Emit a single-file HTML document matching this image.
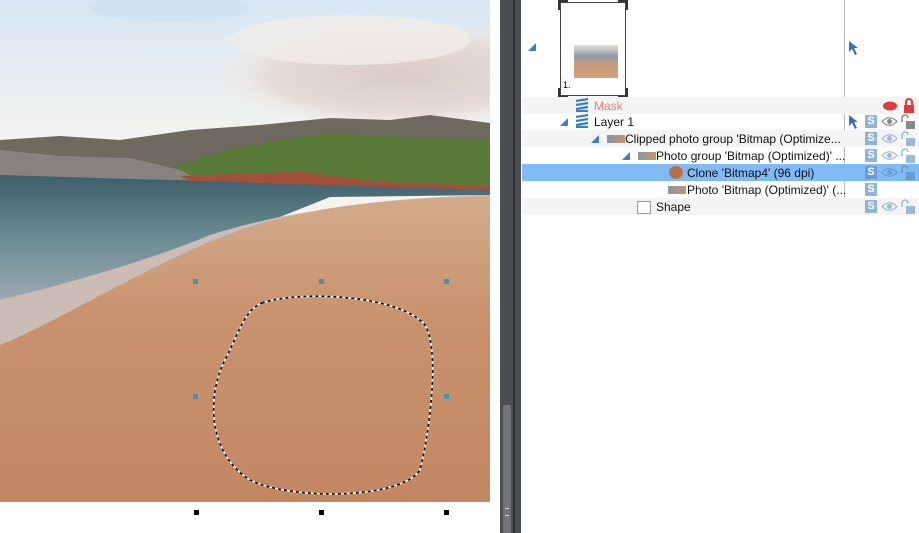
<!DOCTYPE html>
<html><head><meta charset="utf-8"><style>
body{margin:0;width:919px;height:533px;overflow:hidden;background:#fff;font-family:"Liberation Sans","DejaVu Sans",sans-serif;position:relative}
.abs{position:absolute}
.row{position:absolute;left:522px;width:397px;height:17px;font-size:12px;line-height:19px;color:#111}
.g{background:#f4f4f4}.sel{background:#80bbf5}
.tri{position:absolute;width:0;height:0;border-left:8px solid transparent;border-bottom:8px solid #3c7fc4}
.S{position:absolute;left:343px;top:2px;width:12px;height:13px;background:#8fb4dc;color:#fff;font-weight:bold;font-size:11px;line-height:13px;text-align:center}
.sel .S{background:#6a9ad0}
.eye{position:absolute;left:359px;top:3px}
.lk{position:absolute;left:378px;top:1px}
.lay{position:absolute;width:16px;height:14px}
.thumb{position:absolute;width:18px;height:8px;background:linear-gradient(90deg,#8a94a0,#c89470);top:5px}
.br{position:absolute;width:8px;height:8px;border-color:#333;border-style:solid;border-width:0}
</style></head><body>
<svg class="abs" style="left:0;top:0" width="490" height="502" viewBox="0 0 490 502">
<defs>
<linearGradient id="sky" x1="0" y1="0" x2="0" y2="1"><stop offset="0" stop-color="#d6e6f2"/><stop offset=".3" stop-color="#f6f4f0"/><stop offset="1" stop-color="#f5e6d2"/></linearGradient>
<linearGradient id="sea" x1="0" y1="0" x2="0" y2="1"><stop offset="0" stop-color="#3d5d6a"/><stop offset=".5" stop-color="#6a8c92"/><stop offset="1" stop-color="#9ca9b0"/></linearGradient>
<linearGradient id="sand" x1="0" y1="0" x2="0" y2="1"><stop offset="0" stop-color="#d3ab8b"/><stop offset=".4" stop-color="#c9926e"/><stop offset="1" stop-color="#c18762"/></linearGradient>
<radialGradient id="cl" cx=".5" cy=".5" r=".5"><stop offset="0" stop-color="#d9cbc6"/><stop offset=".7" stop-color="#e6ddd8"/><stop offset="1" stop-color="#f2ede8" stop-opacity="0"/></radialGradient>
</defs>
<rect width="490" height="502" fill="url(#sky)"/>
<ellipse cx="170" cy="8" rx="80" ry="14" fill="#cfe3f2"/>
<ellipse cx="400" cy="75" rx="190" ry="55" fill="url(#cl)"/>
<ellipse cx="350" cy="40" rx="120" ry="25" fill="#f0ece8" opacity=".8"/>
<polygon points="0,140 60,136 120,140 190,130 260,125 330,118 390,120 430,115 490,123 490,190 0,180" fill="#6f6a60"/>
<polygon points="150,175 220,152 270,142 330,133 390,136 490,140 490,192 200,185" fill="#5a7a3a"/>
<polygon points="0,150 60,156 130,158 180,170 200,180 0,178" fill="#878381"/>
<polygon points="180,176 300,172 380,182 490,186 490,192 200,186" fill="#a2503a"/>
<polygon points="0,175 490,190 490,195 330,197 210,245 150,270 0,300" fill="url(#sea)"/>
<path d="M0,300 L0,345 C60,320 130,275 215,240 C260,222 320,200 490,195 L490,200 C330,200 260,220 210,235 C150,260 80,280 0,300Z" fill="#cbbcb5"/>
<path d="M0,345 C60,320 130,275 215,240 C260,222 320,200 490,196 L490,502 L0,502Z" fill="url(#sand)"/>
<path d="M262,303 C300,290 400,295 425,325 C440,350 430,430 420,470 C400,500 290,500 250,480 C210,455 205,400 225,360 C240,330 245,310 262,303Z" fill="none" stroke="#fff" stroke-width="1.5"/>
<path d="M262,303 C300,290 400,295 425,325 C440,350 430,430 420,470 C400,500 290,500 250,480 C210,455 205,400 225,360 C240,330 245,310 262,303Z" fill="none" stroke="#000" stroke-width="1.5" stroke-dasharray="3 3"/>
<g fill="#4a8fb8"><rect x="193" y="279" width="5" height="5"/><rect x="319" y="279" width="5" height="5"/><rect x="444" y="279" width="5" height="5"/><rect x="193" y="394" width="5" height="5"/><rect x="444" y="394" width="5" height="5"/></g>
</svg>
<div class="abs" style="left:194px;top:510px;width:5px;height:5px;background:#000"></div>
<div class="abs" style="left:319px;top:510px;width:5px;height:5px;background:#000"></div>
<div class="abs" style="left:444px;top:510px;width:5px;height:5px;background:#000"></div>
<div class="abs" style="left:500px;top:0;width:21px;height:533px;background:#4a4d52"></div>
<div class="abs" style="left:513px;top:0;width:2px;height:533px;background:#2e3034"></div>
<div class="abs" style="left:503px;top:405px;width:8px;height:128px;background:#717378;border-radius:2px"></div>
<div class="abs" style="left:505px;top:508px;width:4px;height:6px;border-top:1px solid #ccc;border-bottom:1px solid #ccc"></div>
<div class="abs" style="left:844px;top:0;width:1px;height:215px;background:#bbb"></div>
<div class="tri" style="left:528px;top:43px"></div>
<svg class="abs" style="left:848px;top:40px" width="10" height="16"><path d="M1,1 L1,12 L4,9 L7,15 L9,14 L6,8 L10,8Z" fill="#3a72b8"/></svg>
<div class="abs" style="left:560px;top:2px;width:64px;height:92px;border:1px solid #444;background:#fff"></div>
<div class="br" style="left:558px;top:0;border-top-width:2px;border-left-width:2px"></div>
<div class="br" style="left:618px;top:0;border-top-width:2px;border-right-width:2px"></div>
<div class="br" style="left:558px;top:88px;border-bottom-width:2px;border-left-width:2px"></div>
<div class="br" style="left:618px;top:88px;border-bottom-width:2px;border-right-width:2px"></div>
<div class="abs" style="left:574px;top:45px;width:44px;height:33px;background:linear-gradient(180deg,#e8e0da 0%,#8d9aa6 35%,#c79b7a 60%,#d2a07d 100%)"></div>
<div class="abs" style="left:563px;top:80px;font-size:9px">1.</div>
<div class="row g" style="top:97px"><svg class="lay" style="left:52px;top:1px" viewBox="0 0 16 14"><path d="M2,3 L14,1 M2,7 L14,5 M2,11 L14,9 M2,13 L14,13" stroke="#3c7fc4" stroke-width="2.2"/></svg><span style="position:absolute;left:72px;color:#e88080">Mask</span>
<svg class="abs" style="left:360px;top:4px" width="16" height="10"><ellipse cx="8" cy="5" rx="7" ry="4.5" fill="#e03a3a"/></svg>
<svg class="abs" style="left:381px;top:1px" width="12" height="15"><path d="M3,7 V4 a3,3 0 0 1 6,0 V7" stroke="#e03a3a" stroke-width="2" fill="none"/><rect x="1" y="7" width="10" height="8" fill="#e03a3a"/></svg></div>
<div class="row" style="top:113px"><div class="tri" style="left:38px;top:5px"></div><svg class="lay" style="left:52px;top:1px" viewBox="0 0 16 14"><path d="M2,3 L14,1 M2,7 L14,5 M2,11 L14,9 M2,13 L14,13" stroke="#3c7fc4" stroke-width="2.2"/></svg><span style="position:absolute;left:72px">Layer 1</span>
<svg class="abs" style="left:326px;top:1px" width="10" height="16"><path d="M1,1 L1,12 L4,9 L7,15 L9,14 L6,8 L10,8Z" fill="#3a72b8"/></svg>
<div class="S">S</div><svg class="eye" width="17" height="11"><path d="M1,5.5 Q8.5,-2 16,5.5 Q8.5,13 1,5.5Z" fill="none" stroke="#888" stroke-width="1.2"/><circle cx="8.5" cy="5.5" r="2.5" fill="#888"/></svg><svg class="lk" width="16" height="15"><path d="M2,8 V4 a3,3 0 0 1 6,0" stroke="#888" stroke-width="1.6" fill="none"/><rect x="6" y="7" width="9" height="8" fill="#888"/></svg></div>
<div class="row g" style="top:130px"><div class="tri" style="left:69px;top:5px"></div><div class="thumb" style="left:85px"></div><span style="position:absolute;left:103px">Clipped photo group 'Bitmap (Optimize...</span><div class="S">S</div><svg class="eye" width="17" height="11"><path d="M1,5.5 Q8.5,-2 16,5.5 Q8.5,13 1,5.5Z" fill="none" stroke="#9bb9dc" stroke-width="1.2"/><circle cx="8.5" cy="5.5" r="2.5" fill="#9bb9dc"/></svg><svg class="lk" width="16" height="15"><path d="M2,8 V4 a3,3 0 0 1 6,0" stroke="#9bb9dc" stroke-width="1.6" fill="none"/><rect x="6" y="7" width="9" height="8" fill="#9bb9dc"/></svg></div>
<div class="row" style="top:147px"><div class="tri" style="left:100px;top:5px"></div><div class="thumb" style="left:116px"></div><span style="position:absolute;left:134px">Photo group 'Bitmap (Optimized)' ...</span><div class="S">S</div><svg class="eye" width="17" height="11"><path d="M1,5.5 Q8.5,-2 16,5.5 Q8.5,13 1,5.5Z" fill="none" stroke="#9bb9dc" stroke-width="1.2"/><circle cx="8.5" cy="5.5" r="2.5" fill="#9bb9dc"/></svg><svg class="lk" width="16" height="15"><path d="M2,8 V4 a3,3 0 0 1 6,0" stroke="#9bb9dc" stroke-width="1.6" fill="none"/><rect x="6" y="7" width="9" height="8" fill="#9bb9dc"/></svg></div>
<div class="row sel" style="top:164px"><svg class="abs" style="left:146px;top:1px" width="16" height="15"><ellipse cx="8" cy="7.5" rx="7" ry="6.5" fill="#b5714a"/></svg><span style="position:absolute;left:165px">Clone 'Bitmap4' (96 dpi)</span><div class="S">S</div><svg class="eye" width="17" height="11"><path d="M1,5.5 Q8.5,-2 16,5.5 Q8.5,13 1,5.5Z" fill="none" stroke="#6a9ad0" stroke-width="1.2"/><circle cx="8.5" cy="5.5" r="2.5" fill="#6a9ad0"/></svg><svg class="lk" width="16" height="15"><path d="M2,8 V4 a3,3 0 0 1 6,0" stroke="#6a9ad0" stroke-width="1.6" fill="none"/><rect x="6" y="7" width="9" height="8" fill="#6a9ad0"/></svg></div>
<div class="row" style="top:181px"><div class="thumb" style="left:146px"></div><span style="position:absolute;left:165px">Photo 'Bitmap (Optimized)' (...</span><div class="S">S</div></div>
<div class="row g" style="top:198px"><div class="abs" style="left:115px;top:3px;width:12px;height:11px;border:1px solid #999;background:#fff"></div><span style="position:absolute;left:134px">Shape</span><div class="S">S</div><svg class="eye" width="17" height="11"><path d="M1,5.5 Q8.5,-2 16,5.5 Q8.5,13 1,5.5Z" fill="none" stroke="#9bb9dc" stroke-width="1.2"/><circle cx="8.5" cy="5.5" r="2.5" fill="#9bb9dc"/></svg><svg class="lk" width="16" height="15"><path d="M2,8 V4 a3,3 0 0 1 6,0" stroke="#9bb9dc" stroke-width="1.6" fill="none"/><rect x="6" y="7" width="9" height="8" fill="#9bb9dc"/></svg></div>
</body></html>
